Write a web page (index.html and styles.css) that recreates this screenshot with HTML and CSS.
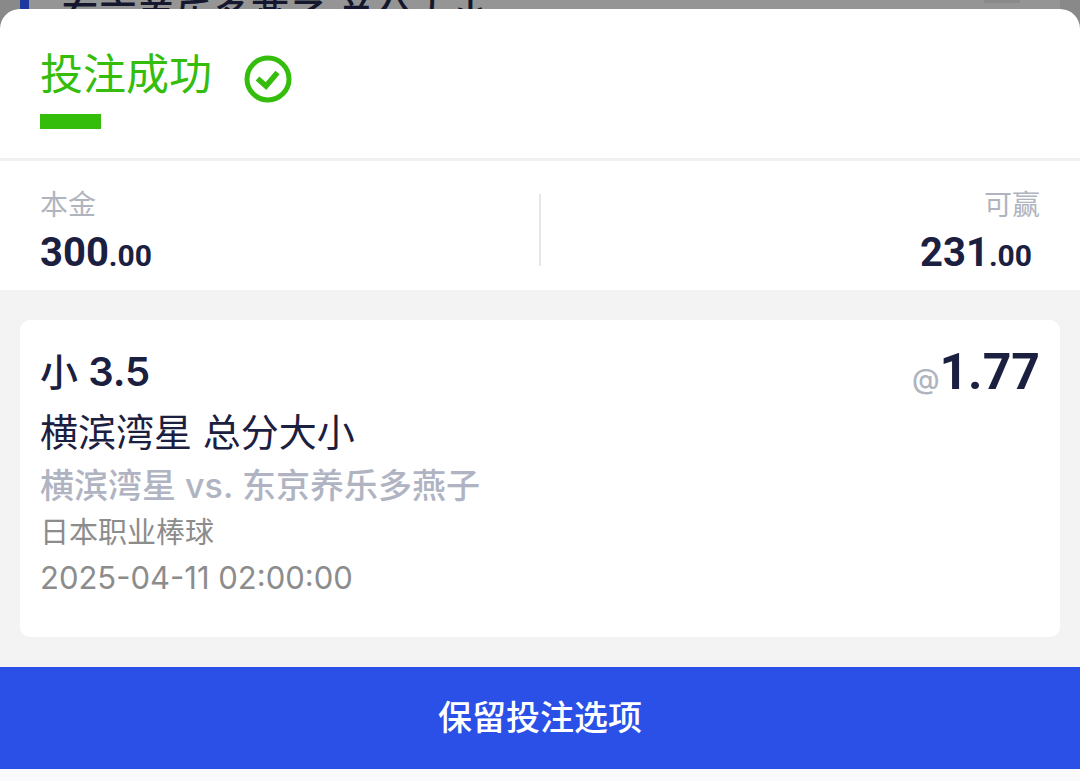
FILE: index.html
```
<!DOCTYPE html>
<html lang="zh-CN">
<head>
  <meta charset="UTF-8">
  <meta name="viewport" content="width=device-width, initial-scale=1">
  <title>投注成功</title>
  <link rel="stylesheet" href="styles.css">
</head>
<body>
  <!-- Dimmed bet list behind the sheet -->
  <div class="backdrop" aria-hidden="true">
    <div class="backdrop-card">
      <span>东京养乐多燕子 总分大小</span>
      <span class="backdrop-icon"></span>
    </div>
  </div>

  <main class="sheet">
    <header class="sheet-header">
      <h1>投注成功</h1>
      <svg class="check-icon" viewBox="0 0 48 48" fill="none" stroke="currentColor" stroke-width="5">
        <circle cx="24" cy="24" r="21"/>
        <path d="M13.5 23.5l8.5 7.5 11.5-13.5" stroke-width="5.5"/>
      </svg>
    </header>

    <dl class="amounts">
      <div class="amount">
        <dt>本金</dt>
        <dd>300<small>.00</small></dd>
      </div>
      <div class="amount amount-win">
        <dt>可赢</dt>
        <dd>231<small>.00</small></dd>
      </div>
    </dl>

    <section class="bets">
      <article class="bet">
        <div class="bet-top">
          <h2>小 <span>3.5</span></h2>
          <div class="odds"><span>@</span>1.77</div>
        </div>
        <p class="market">横滨湾星 总分大小</p>
        <p class="teams">横滨湾星 vs. 东京养乐多燕子</p>
        <p class="meta">日本职业棒球</p>
        <p class="meta meta-time">2025-04-11 02:00:00</p>
      </article>
    </section>

    <button type="button" class="keep-button">保留投注选项</button>
  </main>
</body>
</html>
```

FILE: styles.css
```
* {
  box-sizing: border-box;
}
body {
  position: relative;
  margin: 0;
  padding-top: 9px;
  background-color: #fafafc;
  color: #1c2040;
  font-family: Inter, "Noto Sans CJK SC", sans-serif;
}
h1, h2, p, dl, dd {
  margin: 0;
}

/* Page behind the sheet */
.backdrop {
  position: absolute;
  top: 0;
  left: 0;
  right: 0;
  height: 60px;
  padding: 0 20px;
  overflow: hidden;
  background-color: #898989;
}
.backdrop-card {
  display: flex;
  justify-content: space-between;
  height: 60px;
  padding: 0 40px 0 32px;
  border-left: 9px solid #1d389f;
  background-color: #959595;
  color: #14172d;
  font-size: 38px;
  font-weight: 500;
  line-height: 32px;
}
.backdrop-icon {
  width: 36px;
  height: 3px;
  background-color: #8a8a8a;
}

.sheet {
  position: relative;
  border-radius: 20px 20px 0 0;
  background-color: #fff;
}
.sheet-header {
  display: flex;
  align-items: center;
  gap: 32px;
  padding: 36px 40px 55px;
  border-bottom: 3px solid #f0f0f0;
  color: #35bd0c;
}
.sheet-header h1 {
  position: relative;
  font-size: 43px;
  font-weight: 400;
  line-height: 54px;
}
.sheet-header h1::after {
  content: "";
  position: absolute;
  left: 0;
  top: 67px;
  width: 61px;
  height: 15px;
  background-color: #35bd0c;
}
.check-icon {
  width: 48px;
  height: 48px;
  margin-top: 10px;
}

/* Stake and possible win */
.amounts {
  display: flex;
  padding: 24px 40px 9px;
  background: linear-gradient(#e6e6e8, #e6e6e8) center 33px / 2px 72px no-repeat;
}
.amount {
  flex: 1;
}
.amount dt {
  color: #b0b4be;
  font-size: 28px;
  line-height: 40px;
}
.amount dd {
  font-family: Roboto, sans-serif;
  font-size: 40px;
  font-weight: 700;
  line-height: 56px;
}
.amount small {
  font-size: 30px;
  line-height: 30px;
}
.amount-win {
  text-align: right;
}
.amount-win dd {
  padding-right: 8px;
}

.bets {
  padding: 30px 20px;
  background-color: #f3f3f3;
}
.bet {
  padding: 22px 20px 37px;
  border-radius: 10px;
  background-color: #fff;
}
.bet-top {
  display: flex;
  justify-content: space-between;
  line-height: 60px;
}
.bet h2 {
  font-size: 38px;
  font-weight: 500;
}
.bet h2 span {
  font-size: 40px;
  font-weight: 600;
  line-height: 40px;
}
.odds {
  font-family: Roboto, sans-serif;
  font-size: 50px;
  font-weight: 700;
}
.odds span {
  color: #b0b4be;
  font-family: Inter, sans-serif;
  font-size: 28px;
  font-weight: 500;
  line-height: 28px;
}
.market {
  font-size: 38px;
  line-height: 60px;
}
.teams {
  color: #b0b4c2;
  font-size: 34px;
  font-weight: 500;
  line-height: 48px;
}
.meta {
  color: #8c8c8c;
  font-size: 29px;
  line-height: 45px;
}
.meta-time {
  font-size: 31px;
}

.keep-button {
  display: block;
  width: 100%;
  padding: 27px 0;
  border: 0;
  background-color: #2a50e8;
  box-shadow: 0 1px 1px #b4bff0;
  color: #fff;
  font-family: inherit;
  font-size: 34px;
  font-weight: 500;
  line-height: 48px;
  cursor: pointer;
}
```
